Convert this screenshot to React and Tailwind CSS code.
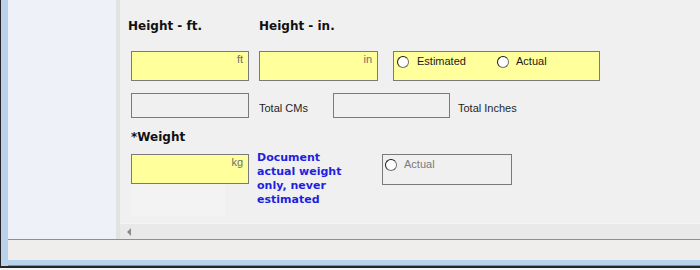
export default function App() {
  const bold = { fontFamily: '"DejaVu Sans", Verdana, sans-serif' };
  const sans = { fontFamily: '"Liberation Sans", Arial, sans-serif' };

  const Radio = () => (
    <span className="inline-block w-[12px] h-[12px] rounded-full bg-white border-[1.5px] border-t-[#1a1a1a] border-l-[#1a1a1a] border-r-[#707070] border-b-[#707070] shrink-0" />
  );

  const UnitBox = ({ unit, width }) => (
    <div
      className={`${width} h-[30px] bg-[#ffff9c] border border-[#7a7a7a] flex justify-end items-start pt-[1px] pr-[5px]`}
    >
      <span className="text-[11px] leading-[13px] text-[#6e6e6e]" style={sans}>
        {unit}
      </span>
    </div>
  );

  return (
    <div className="w-[700px] h-[270px] bg-[#f4f4f4] flex flex-col">
      <div className="h-[268px] flex flex-col border-l border-[#262626] bg-[#b9d1ea] pl-[7px]">
        <div className="h-[260px] flex flex-col">
          <div className="h-[239px] flex">
            <div className="w-[108px] bg-[#eef2f8]" />
            <div className="w-[4px] bg-[#e2e2e2]" />
            <div className="flex-1 flex flex-col bg-[#f0f0f0]">
              <div className="flex-1 flex flex-col">
                {/* labels */}
                <div className="mt-[19px] h-[14px] flex pl-[8px] text-[12px] leading-[14px] font-bold text-[#111]" style={bold}>
                  <div className="w-[131px]">Height - ft.</div>
                  <div>Height - in.</div>
                </div>

                {/* height inputs */}
                <div className="mt-[18px] h-[30px] flex pl-[11px]">
                  <UnitBox unit="ft" width="w-[118px]" />
                  <div className="ml-[10px]">
                    <UnitBox unit="in" width="w-[119px]" />
                  </div>
                  <div className="ml-[15px] w-[207px] h-[30px] bg-[#ffff9c] border border-[#7a7a7a] pt-[3px] pl-[3px]">
                    <div className="flex h-[13px] items-center text-[11px] leading-[13px] text-[#1a1a1a]" style={sans}>
                      <div className="w-[100px] flex items-center gap-[8px]">
                        <Radio />
                        <span>Estimated</span>
                      </div>
                      <div className="flex items-center gap-[7px]">
                        <Radio />
                        <span>Actual</span>
                      </div>
                    </div>
                  </div>
                </div>

                {/* totals */}
                <div className="mt-[12px] h-[25px] flex pl-[11px] text-[11px] leading-[13px] text-[#1f1f1f]" style={sans}>
                  <div className="w-[118px] h-[25px] border border-[#7a7a7a]" />
                  <div className="w-[84px] pl-[10px] pt-[9px]">Total CMs</div>
                  <div className="w-[117px] h-[25px] border border-[#7a7a7a]" />
                  <div className="pl-[8px] pt-[9px]">Total Inches</div>
                </div>

                {/* weight label */}
                <div className="mt-[12px] h-[14px] pl-[11px] text-[12px] leading-[14px] font-bold text-[#111]" style={bold}>
                  *Weight
                </div>

                {/* weight row */}
                <div className="mt-[7px] flex items-start pl-[11px]">
                  <div className="mt-[3px] flex flex-col">
                    <UnitBox unit="kg" width="w-[118px]" />
                    <div className="ml-[-1px] w-[95px] h-[32px] bg-[#f3f3f3]" />
                  </div>
                  <div className="ml-[8px] w-[125px] text-[11px] leading-[14px] font-bold text-[#1f1fe0]" style={bold}>
                    Document
                    <br />
                    actual weight
                    <br />
                    only, never
                    <br />
                    estimated
                  </div>
                  <div className="mt-[3px] w-[130px] h-[31px] border border-[#7a7a7a] pt-[3px] pl-[2px]">
                    <div className="flex items-center gap-[7px] h-[13px] text-[11px] leading-[13px] text-[#7a7a7a]" style={sans}>
                      <Radio />
                      <span>Actual</span>
                    </div>
                  </div>
                </div>
              </div>

              {/* horizontal scrollbar */}
              <div className="h-[16px] bg-[#e9e9e9] border-t border-[#f4f4f4] flex items-center pl-[7px]">
                <svg width="5" height="8" viewBox="0 0 5 8">
                  <polygon points="4,0 4,8 0,4" fill="#8a8a8a" />
                </svg>
              </div>
            </div>
          </div>
          <div className="h-px bg-[#8e8e8e]" />
          <div className="h-[20px] bg-[#f0eeed]" />
        </div>
        <div className="h-[5px] bg-[#b9d1ea]" />
        <div className="h-px bg-[#4d9fd2]" />
        <div className="h-[2px] bg-[#262626] ml-[-8px]" />
      </div>
      <div className="h-[2px] bg-[#f4f4f4]" />
    </div>
  );
}
